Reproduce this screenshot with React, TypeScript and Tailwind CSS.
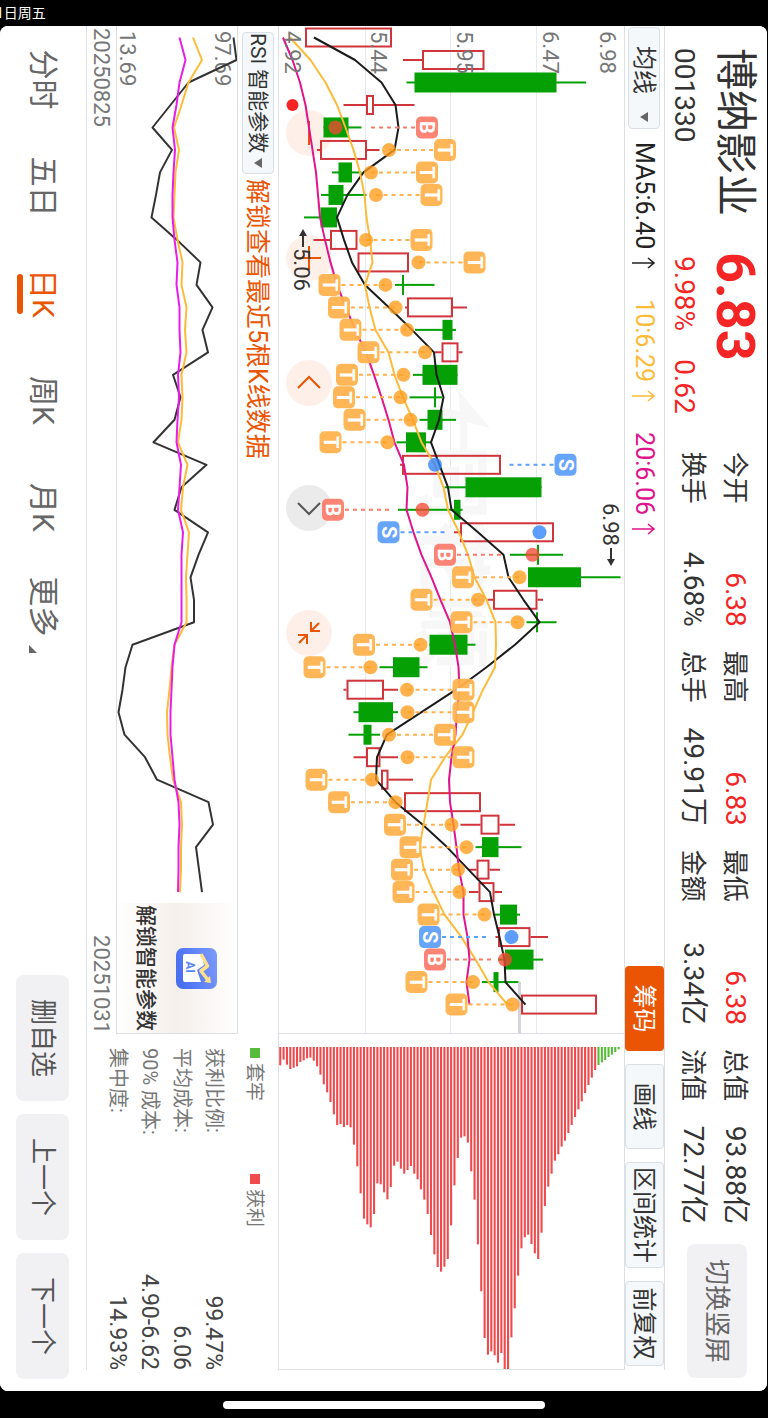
import React from 'react';

type Mark = { kind: 'T' | 'B' | 'S'; badge: number; dot: number; tail?: number };
type Candle = { low: number; open: number; close: number; high: number; up?: boolean; mark?: Mark };

const TOP = 624;
const STEP = 22.49;
const px = (i: number) => 11.5 + STEP * i;
const py = (v: number) => TOP - v;

const c = (
  up: boolean,
  low: number,
  open: number,
  close: number,
  high: number,
  kind?: 'T' | 'B' | 'S',
  badge = 0,
  dot = 0,
  tail?: number,
): Candle => ({ up, low, open, close, high, mark: kind ? { kind, badge, dot, tail } : undefined });

const candles: Candle[] = [
  c(true, 305, 305, 392, 392),
  c(true, 403, 422, 484.5, 484.5),
  c(false, 406.5, 414.5, 556.5, 586),
  c(true, 343.5, 366, 374, 414.5),
  c(false, 323.5, 323.5, 348.5, 361.5, 'B', 427, 335.5, 371),
  c(true, 317, 320, 367, 379.5, 'T', 445, 389),
  c(false, 332, 338.5, 352, 361.5, 'T', 427, 371),
  c(false, 321, 328.5, 343.5, 366.5, 'T', 431.5, 376),
  c(false, 304, 320.5, 337, 337),
  c(true, 313.5, 330, 357.5, 357.5, 'T', 421.5, 366),
  c(true, 357.5, 357.5, 409, 409, 'T', 474.5, 418.5),
  c(false, 395, 402, 404, 434.5, 'T', 329.5, 385.5),
  c(true, 405, 407, 453, 467, 'T', 339, 395.5),
  c(false, 415, 442.5, 452.5, 456, 'T', 350.5, 407),
  c(true, 434.5, 441.5, 458.5, 462.5, 'T', 368.5, 425),
  c(false, 413, 422.5, 457.5, 457.5, 'T', 347, 403.5),
  c(false, 409.5, 434, 436, 442, 'T', 344, 400.5),
  c(false, 419.5, 427.5, 442.5, 456, 'T', 354.5, 410.5),
  c(false, 396.5, 406, 426, 431.5, 'T', 330.5, 387.5),
  c(true, 400, 402, 501, 501, 'S', 565.5, 435, 509),
  c(false, 444.5, 465.5, 541.5, 541.5),
  c(false, 398, 454, 460.5, 462.5, 'B', 333, 422.5, 390),
  c(true, 454, 460, 554, 554, 'S', 388.5, 539.5, 445),
  c(false, 510, 537, 539, 563, 'B', 445, 532.5, 503),
  c(false, 528, 528, 581, 620.5, 'T', 463, 519.5),
  c(true, 487.5, 493, 537.5, 543, 'T', 421.5, 478),
  c(false, 526.5, 536, 538, 556.5, 'T', 461.5, 517.5),
  c(false, 429.5, 429.5, 467.5, 475.5, 'T', 364, 420.5),
  c(false, 379.5, 393, 419.5, 427.5, 'T', 314.5, 370.5),
  c(true, 343.5, 346.5, 384, 398, 'T', 463.5, 407),
  c(false, 353.5, 358.5, 393, 398, 'T', 463.5, 407.5),
  c(false, 348.5, 363.5, 371.5, 380, 'T', 445, 389),
  c(true, 353.5, 366, 380.5, 398, 'T', 463.5, 407.5),
  c(true, 381, 381, 388.5, 413, 'T', 316.5, 372),
  c(true, 404, 404, 481, 481, 'T', 339, 395.5),
  c(true, 460.5, 480.5, 499.5, 515, 'T', 395, 451.5),
  c(false, 475.5, 482, 498.5, 521.5, 'T', 410.5, 466.5),
  c(true, 468.5, 476.5, 489.5, 500, 'T', 402, 458),
  c(true, 469, 478.5, 494.5, 502, 'T', 403.5, 459.5),
  c(false, 495, 500, 517, 520, 'T', 428.5, 484.5),
  c(true, 495.5, 498, 530.5, 548, 'S', 430, 511.5, 486),
  c(false, 498, 505, 533.5, 543, 'B', 435, 505, 491),
  c(false, 482, 493.5, 498.5, 518.5, 'T', 416.5, 473),
  c(true, 521, 521, 597, 597, 'T', 456.5, 512.5),
];

const ma5 = [314, 355, 381.5, 395.5, 398.5, 394.5, 363.5, 347.5, 337, 344, 352, 365, 389, 412, 434, 436.5, 443.5, 439, 431, 439.5, 448, 451.5, 478, 503.5, 508.5, 523.5, 539.5, 515, 486.5, 456, 421.5, 387, 377, 376, 395.5, 422.5, 447, 468.5, 490, 494, 499.5, 504.5, 505.5, 525.5];
const ma10 = [290, 310.5, 325.5, 337, 345.5, 353.5, 360, 364.5, 366.5, 370, 372.5, 365, 369.5, 375.5, 388.5, 394.5, 403, 413, 421.5, 435, 443.5, 448, 459, 468, 474.5, 486.5, 495.5, 496, 495, 483, 473, 462.5, 445, 431, 427.5, 423.5, 419.5, 424, 433.5, 444.5, 461.5, 475.5, 488.5, 507.5];
const ma20 = [283, 292.5, 300, 305.5, 309, 312.5, 316, 318, 320, 325, 330.5, 337, 346, 355, 366, 374, 381.5, 388.5, 394.5, 404, 407.5, 406.5, 413.5, 421.5, 431.5, 440.5, 450, 455, 458.5, 459.5, 457, 455.5, 451.5, 449, 450, 453.5, 456.5, 459, 463.5, 463.5, 467.5, 469.5, 466.5, 469.5];

const rsiFast = [233.5, 236.5, 188.5, 170.5, 152.5, 172, 160, 156, 151.5, 177, 200.5, 196.5, 212.5, 202.5, 208, 173, 180.5, 174.5, 153.5, 206.5, 181.5, 174.5, 208, 198.5, 190.5, 194, 194, 132.5, 125.5, 122.5, 118.5, 124.5, 145, 157, 208.5, 213, 196, 199, 202];
const rsiMid = [193, 202, 188.5, 181.5, 174, 179, 175.5, 174.5, 173.5, 177.5, 182.5, 181.5, 186.5, 185, 186.5, 181.5, 182.5, 181.5, 178, 187.5, 183, 181, 189, 187.5, 186, 186.5, 186.5, 174.5, 171.5, 169.5, 167, 167.5, 170, 173, 181, 182, 181, 181, 180];
const rsiSlow = [179.5, 185.5, 179.5, 176.5, 172.5, 175, 173.5, 172.5, 172.5, 174.5, 177.5, 176.5, 179.5, 179.5, 180.5, 178, 179, 177.5, 176.5, 181, 179.5, 178, 183, 181.5, 181.5, 181.5, 181.5, 174.5, 172.5, 171.5, 170.5, 170.5, 172.5, 174.5, 178.5, 179.5, 178.5, 178.5, 178];

const chips = [55, 38, 53, 66, 62, 58, 45, 40, 34, 32, 41, 58, 83, 112, 136, 165, 202, 234, 231, 240, 234, 241, 293, 358, 439, 515, 532, 541, 501, 409, 412, 436, 457, 420, 356, 344, 365, 380, 369, 357, 380, 397, 427, 458, 501, 564, 622, 660, 674, 659, 636, 535, 415, 333, 272, 268, 287, 373, 458, 592, 733, 873, 923, 913, 925, 947, 918, 968, 969, 871, 784, 686, 604, 571, 563, 591, 619, 636, 557, 477, 419, 380, 341, 322, 299, 281, 258, 234, 210, 187, 163, 138, 114, 92, 69, 54, 46, 39, 30, 23, 15, 7];

const line = (vals: number[], top: number) => vals.map((v, i) => `${px(i).toFixed(1)},${(top - v).toFixed(1)}`).join(' ');

const markColor = { T: '#ffb14d', B: '#fc7c6c', S: '#5d9ffb' };
const dotColor = { T: '#ff9c1a', B: '#f54a33', S: '#2f82fa' };

function CandleShape({ d, i }: { d: Candle; i: number }) {
  const x = px(i);
  if (d.up) {
    return (
      <g stroke="#d0353c" strokeWidth="2" fill="none">
        <path d={`M${x} ${py(d.low)}V${py(d.open)}M${x} ${py(d.close)}V${py(d.high)}`} />
        <rect x={x - 9} y={py(d.close) + 1} width="18" height={d.close - d.open - 2} />
      </g>
    );
  }
  return (
    <g fill="#04a004">
      <rect x={x - 1} y={py(d.high)} width="2" height={d.high - d.low} />
      <rect x={x - 10} y={py(d.close)} width="20" height={d.close - d.open} />
    </g>
  );
}

function MarkShape({ m, i }: { m: Mark; i: number }) {
  const x = px(i);
  const end = m.tail ?? m.dot;
  const start = m.badge + (end < m.badge ? -12 : 12);
  return (
    <g>
      <path d={`M${x} ${py(start)}V${py(end)}`} stroke={markColor[m.kind]} strokeWidth="2" strokeDasharray="4 4" />
      <circle cx={x} cy={py(m.dot)} r="7" fill={dotColor[m.kind]} opacity="0.78" />
      <rect x={x - 11} y={py(m.badge) - 11} width="22" height="22" rx="5" fill={markColor[m.kind]} opacity="0.94" />
      <text x={x} y={py(m.badge) + 7} fontSize="20" fontWeight="700" textAnchor="middle" fill="#fff">
        {m.kind}
      </text>
    </g>
  );
}

function KChart() {
  return (
    <svg viewBox="0 0 1007 345" className="pointer-events-none relative block h-full w-full" aria-label="日K">
      <g stroke="#e6e9f0" strokeWidth="1">
        <path d="M0 87.5H1007M0 173.5H1007M0 258.5H1007" />
      </g>
      <g fill="#f7f7f8">
        <path d="M364 166L402 134L396 157H428V164H394L386 192L378 192L386 164Z" />
        <text x="419" y="198" fontSize="75" fontWeight="700">同花顺</text>
      </g>
      {candles.map((d, i) => (
        <CandleShape key={i} d={d} i={i} />
      ))}
      <path d="M956 104.5H1007" stroke="#d3d5da" strokeWidth="3" />
      <g fill="none" strokeWidth="2" strokeLinejoin="round">
        <polyline points={line(ma5, TOP)} stroke="#1c1c1c" />
        <polyline points={line(ma10, TOP)} stroke="#fdbb3a" />
        <polyline points={line(ma20, TOP)} stroke="#e0148c" />
      </g>
      {candles.map((d, i) => (d.mark ? <MarkShape key={i} m={d.mark} i={i} /> : null))}
      <circle cx="79" cy="331.5" r="6" fill="#f62525" />
      <g fontSize="22" fill="#777">
        <text x="5" y="24">6.98</text>
        <text x="5" y="81">6.47</text>
        <text x="5" y="167">5.95</text>
        <text x="5" y="253">5.44</text>
        <text x="5" y="339">4.92</text>
      </g>
      <g fontSize="22" fill="#333">
        <text x="222" y="330">5.06</text>
        <text x="477" y="21">6.98</text>
      </g>
      <g fill="#333">
        <path d="M203 321L210 317V320H221V322H210V325Z" />
        <path d="M540 13L533 9V12H522V14H533V17Z" />
      </g>
    </svg>
  );
}

function RsiChart() {
  return (
    <svg viewBox="0 0 1007 120" className="block h-full w-full" aria-label="RSI">
      <g fontSize="22" fill="#777">
        <text x="5" y="22">97.69</text>
        <text x="5" y="117">13.69</text>
      </g>
      <g fill="none" strokeWidth="2" strokeLinejoin="round">
        <polyline points={line(rsiFast, 237)} stroke="#333" />
        <polyline points={line(rsiMid, 237)} stroke="#fdbb3a" />
        <polyline points={line(rsiSlow, 237)} stroke="#e81ee8" />
      </g>
    </svg>
  );
}

function ChipChart() {
  return (
    <svg viewBox="0 0 335 345" className="block h-full w-full" aria-label="筹码">
      {chips.map((len, i) => (
        <rect key={i} x="13" y={342.7 - 3.35 * i} width={len / 3} height="2.1" fill={i > 94 ? '#57bb3c' : '#ee4b4e'} />
      ))}
    </svg>
  );
}

function AiIcon() {
  return (
    <svg viewBox="0 0 41 41" className="h-[41px] w-[41px]" aria-hidden="true">
      <defs>
        <linearGradient id="aiBg" x1="0" y1="0" x2="0.3" y2="1">
          <stop offset="0" stopColor="#7d9cfb" />
          <stop offset="1" stopColor="#4a70f2" />
        </linearGradient>
      </defs>
      <rect width="41" height="41" rx="7" fill="url(#aiBg)" />
      <path d="M6 15L17 13L22 20L34 16V32Q34 34 32 34H8Q6 34 6 32Z" fill="#fff" />
      <path d="M6 16L18 9.500L23 16L32 9" fill="none" stroke="#ffe08a" strokeWidth="3.500" strokeLinejoin="round" />
      <path d="M28 7L35 6L34 13Z" fill="#ffe08a" />
      <text x="19" y="31" fontSize="12" fontWeight="700" textAnchor="middle" fill="#5b86f5">AI</text>
    </svg>
  );
}

function Caret() {
  return (
    <svg viewBox="0 0 10 8" className="h-2 w-[10px]" aria-hidden="true">
      <path d="M0 0H10L5 8Z" fill="#666" />
    </svg>
  );
}

function UpArrow() {
  return (
    <svg viewBox="0 0 12 24" className="ml-2 h-6 w-3" fill="none" stroke="currentColor" strokeWidth="1.6" aria-hidden="true">
      <path d="M6 24V2M1 8L6 2L11 8" />
    </svg>
  );
}

const stats = [
  [['今开', '6.38', true], ['换手', '4.68%', false]],
  [['最高', '6.83', true], ['总手', '49.91万', false]],
  [['最低', '6.38', true], ['金额', '3.34亿', false]],
  [['总值', '93.88亿', false], ['流值', '72.77亿', false]],
] as [string, string, boolean][][];

function Header() {
  return (
    <header className="flex h-[102px] shrink-0 pr-[13px] pl-[22px]">
      <div className="grid shrink-0 grid-cols-[auto_auto] content-start gap-x-9 gap-y-2 pt-[6px]">
        <h1 className="text-[42px] leading-[52px] font-normal text-[#333]">博纳影业</h1>
        <strong className="text-[54px] leading-[52px] font-bold text-[#f62525]">6.83</strong>
        <span className="text-[28px] leading-[34px] text-[#333]">001330</span>
        <span className="flex gap-7 pl-1 text-[28px] leading-[34px] text-[#f62525]">
          <span>9.98%</span>
          <span>0.62</span>
        </span>
      </div>
      <div className="ml-[38px] grid flex-1 grid-cols-4 gap-x-6 pt-[11px]">
        {stats.map((col, k) => (
          <dl key={k}>
            {col.map(([label, value, red]) => (
              <div key={label} className="flex h-[42px] items-center justify-between whitespace-nowrap text-[#333]">
                <dt className="text-[26px] leading-8">{label}</dt>
                <dd className={red ? 'text-[28px] leading-8 text-[#f62525]' : 'text-[28px] leading-8'}>{value}</dd>
              </div>
            ))}
          </dl>
        ))}
      </div>
      <button type="button" className="mt-5 ml-5 h-[60px] w-[134px] shrink-0 rounded-lg bg-[#f1f1f4] text-[26px] text-[#666]">
        切换竖屏
      </button>
    </header>
  );
}

function Toolbar() {
  const tool = 'h-full rounded border border-[#d9dfe4] bg-[#f4f8fa] text-[24px] leading-none text-[#333]';
  return (
    <div className="mr-[21px] flex h-[41px] shrink-0 items-center border-y border-[#dcdfe4]">
      <button type="button" className="ml-px flex h-8 w-[102px] items-center justify-between rounded border border-[#d9dfe4] bg-[#f4f8fa] pr-[6px] pl-[18px] text-[24px] leading-none text-[#333]">
        均线
        <Caret />
      </button>
      <div className="ml-[13px] flex gap-[30px] text-[25px] leading-none">
        <span className="flex items-center text-[#222]">MA5:6.40<UpArrow /></span>
        <span className="flex items-center text-[#fdbb3a]">10:6.29<UpArrow /></span>
        <span className="flex items-center text-[#e0148c]">20:6.06<UpArrow /></span>
      </div>
      <div className="ml-auto flex h-full gap-[13px] pr-1">
        <button type="button" className="h-full w-[85px] rounded bg-[#ea5504] text-[24px] leading-none text-white">筹码</button>
        <button type="button" className={`w-[85px] ${tool}`}>画线</button>
        <button type="button" className={`w-[106px] ${tool}`}>区间统计</button>
        <button type="button" className={`w-[85px] ${tool}`}>前复权</button>
      </div>
    </div>
  );
}

const controls: [string, string, boolean][] = [
  ['缩小', 'M-12 0H12', false],
  ['放大', 'M-12 0H12M0 -12V12', false],
  ['向左', 'M5 -11L-6 0L5 11', false],
  ['向右', 'M-5 -11L6 0L-5 11', true],
  ['收起', 'M-10 -10L-2 -2M-2 -11V-2H-11M10 10L2 2M2 11V2H11', false],
];

function ChartControls() {
  return (
    <div className="absolute bottom-[7px] left-[84px] flex gap-[79px]">
      {controls.map(([label, d, gray]) => (
        <button
          key={label}
          type="button"
          aria-label={label}
          className={gray ? 'h-[46px] w-[46px] rounded-full bg-[#ebebeb] text-[#555]' : 'h-[46px] w-[46px] rounded-full bg-[#fef0e8] text-[#ea5504]'}
        >
          <svg viewBox="-23 -23 46 46" className="block h-full w-full" fill="none" stroke="currentColor" strokeWidth="2">
            <path d={d} />
          </svg>
        </button>
      ))}
    </div>
  );
}

const chipInfo = [
  ['获利比例:', '99.47%'],
  ['平均成本:', '6.06'],
  ['90% 成本:', '4.90-6.62'],
  ['集中度:', '14.93%'],
];

const tabs = ['分时', '五日', '日K', '周K', '月K', '更多'];

function Stage() {
  return (
    <main className="flex h-[100cqw] w-[100cqh] origin-top-left translate-x-[100cqw] rotate-90 flex-col bg-white">
      <Header />
      <Toolbar />
      <div className="mr-[21px] flex min-h-0 flex-1 border-b border-[#dcdfe4]">
        <div className="flex min-w-0 flex-[3] flex-col">
          <section className="relative min-h-0 flex-1 border-r border-b border-[#dcdfe4]">
            <ChartControls />
            <KChart />
          </section>
          <div className="flex h-10 shrink-0 items-center pl-[6px]">
            <button type="button" className="flex h-8 w-[142px] items-center justify-between rounded border border-[#d9dfe4] bg-[#f4f8fa] pr-[5px] text-[21px] leading-none whitespace-nowrap text-[#333]">
              RSI 智能参数
              <Caret />
            </button>
            <a href="#unlock" className="ml-[5px] text-[25px] leading-none text-[#ea5504]">解锁查看最近5根K线数据</a>
          </div>
          <section className="relative h-[122px] shrink-0 border-y border-r border-[#dcdfe4]">
            <RsiChart />
            <button type="button" className="absolute top-0 right-0 flex h-full w-[130px] flex-col items-center bg-linear-to-b from-white via-[#f5efea] to-white pt-5 text-[#333]">
              <AiIcon />
              <span className="mt-5 text-[21px] leading-[21px] font-medium whitespace-nowrap">解锁智能参数</span>
            </button>
          </section>
          <div className="flex h-[29px] shrink-0 items-center justify-between pl-[2px] text-[22px] leading-none text-[#777]">
            <span>20250825</span>
            <span>20251031</span>
          </div>
        </div>
        <aside className="flex min-w-0 flex-1 flex-col">
          <div className="min-h-0 flex-1 border-r border-b border-[#dcdfe4]">
            <ChipChart />
          </div>
          <div className="h-[191px] shrink-0 pl-[14px]">
            <div className="flex h-[46px] items-center text-[19px] leading-none text-[#777]">
              <span className="flex w-[126px] items-center gap-[5px]"><i className="h-[10px] w-[10px] bg-[#57bb3c]" />套牢</span>
              <span className="flex items-center gap-[5px]"><i className="h-[10px] w-[10px] bg-[#ee4b4e]" />获利</span>
            </div>
            <dl className="pt-[2px]">
              {chipInfo.map(([k, v]) => (
                <div key={k} className="flex h-8 items-center justify-between">
                  <dt className="text-[20px] leading-none text-[#777]">{k}</dt>
                  <dd className="text-[23px] leading-none text-[#444]">{v}</dd>
                </div>
              ))}
            </dl>
          </div>
        </aside>
      </div>
      <footer className="flex h-[86px] shrink-0 items-center justify-between pr-3">
        <nav className="flex">
          {tabs.map((t) => (
            <button
              key={t}
              type="button"
              className={
                t === '日K'
                  ? 'relative flex h-[60px] w-[107px] items-center justify-center text-[30px] leading-none text-[#ea5504]'
                  : 'relative flex h-[60px] w-[107px] items-center justify-center text-[30px] leading-none text-[#666]'
              }
            >
              {t}
              {t === '日K' && <span className="absolute bottom-1 h-[6px] w-10 rounded-full bg-[#ea5504]" />}
              {t === '更多' && (
                <svg viewBox="0 0 8 8" className="mt-5 ml-2 h-2 w-2" aria-hidden="true">
                  <path d="M0 8H8V0Z" fill="#666" />
                </svg>
              )}
            </button>
          ))}
        </nav>
        <div className="flex gap-[13px] text-[26px] leading-none text-[#555]">
          <button type="button" className="h-[53px] w-[126px] rounded-lg bg-[#f1f1f4]">删自选</button>
          <button type="button" className="h-[53px] w-[126px] rounded-lg bg-[#f1f1f4]">上一个</button>
          <button type="button" className="h-[53px] w-[126px] rounded-lg bg-[#f1f1f4]">下一个</button>
        </div>
      </footer>
    </main>
  );
}

export default function App() {
  return (
    <div className="flex h-screen w-full flex-col overflow-hidden bg-black font-['Roboto','Noto_Sans_CJK_SC',sans-serif]">
      <div className="flex h-[26px] shrink-0 items-center overflow-hidden text-[14px] leading-none whitespace-nowrap text-white">
        <span className="-ml-1">1日周五</span>
      </div>
      <div className="mr-px min-h-0 flex-1 overflow-hidden rounded-lg bg-white [container-type:size]">
        <Stage />
      </div>
      <div className="flex h-[27px] shrink-0 items-center justify-center">
        <div className="h-2 w-[42%] rounded-full bg-white" />
      </div>
    </div>
  );
}
